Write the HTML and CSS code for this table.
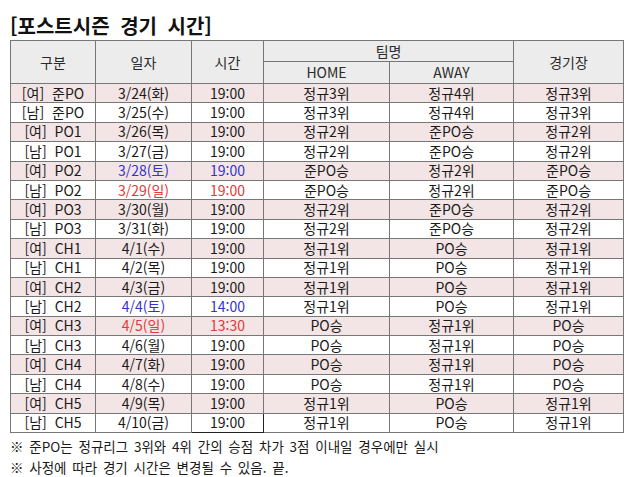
FILE: index.html
```html
<!DOCTYPE html>
<html lang="ko">
<head>
<meta charset="utf-8">
<link rel="stylesheet" href="styles.css">
</head>
<body>
<div class="page">
  <h1 class="title">[포스트시즌 경기 시간]</h1>
  <table class="sched">
    <colgroup>
      <col class="c1"><col class="c2"><col class="c3"><col class="c4"><col class="c5"><col class="c6">
    </colgroup>
    <thead>
      <tr class="h1">
        <th rowspan="2">구분</th>
        <th rowspan="2">일자</th>
        <th rowspan="2">시간</th>
        <th colspan="2">팀명</th>
        <th rowspan="2">경기장</th>
      </tr>
      <tr class="h2">
        <th>HOME</th>
        <th>AWAY</th>
      </tr>
    </thead>
    <tbody>
      <tr class="w"><td>[여] &nbsp;준PO</td><td>3/24(화)</td><td>19:00</td><td>정규3위</td><td>정규4위</td><td>정규3위</td></tr>
      <tr class="m"><td>[남] &nbsp;준PO</td><td>3/25(수)</td><td>19:00</td><td>정규3위</td><td>정규4위</td><td>정규3위</td></tr>
      <tr class="w"><td>[여] &nbsp;PO1</td><td>3/26(목)</td><td>19:00</td><td>정규2위</td><td>준PO승</td><td>정규2위</td></tr>
      <tr class="m"><td>[남] &nbsp;PO1</td><td>3/27(금)</td><td>19:00</td><td>정규2위</td><td>준PO승</td><td>정규2위</td></tr>
      <tr class="w"><td>[여] &nbsp;PO2</td><td class="sat">3/28(토)</td><td class="sat">19:00</td><td>준PO승</td><td>정규2위</td><td>준PO승</td></tr>
      <tr class="m"><td>[남] &nbsp;PO2</td><td class="sun">3/29(일)</td><td class="sun">19:00</td><td>준PO승</td><td>정규2위</td><td>준PO승</td></tr>
      <tr class="w"><td>[여] &nbsp;PO3</td><td>3/30(월)</td><td>19:00</td><td>정규2위</td><td>준PO승</td><td>정규2위</td></tr>
      <tr class="m"><td>[남] &nbsp;PO3</td><td>3/31(화)</td><td>19:00</td><td>정규2위</td><td>준PO승</td><td>정규2위</td></tr>
      <tr class="w"><td>[여] &nbsp;CH1</td><td>4/1(수)</td><td>19:00</td><td>정규1위</td><td>PO승</td><td>정규1위</td></tr>
      <tr class="m"><td>[남] &nbsp;CH1</td><td>4/2(목)</td><td>19:00</td><td>정규1위</td><td>PO승</td><td>정규1위</td></tr>
      <tr class="w"><td>[여] &nbsp;CH2</td><td>4/3(금)</td><td>19:00</td><td>정규1위</td><td>PO승</td><td>정규1위</td></tr>
      <tr class="m"><td>[남] &nbsp;CH2</td><td class="sat">4/4(토)</td><td class="sat">14:00</td><td>정규1위</td><td>PO승</td><td>정규1위</td></tr>
      <tr class="w"><td>[여] &nbsp;CH3</td><td class="sun">4/5(일)</td><td class="sun">13:30</td><td>PO승</td><td>정규1위</td><td>PO승</td></tr>
      <tr class="m"><td>[남] &nbsp;CH3</td><td>4/6(월)</td><td>19:00</td><td>PO승</td><td>정규1위</td><td>PO승</td></tr>
      <tr class="w"><td>[여] &nbsp;CH4</td><td>4/7(화)</td><td>19:00</td><td>PO승</td><td>정규1위</td><td>PO승</td></tr>
      <tr class="m"><td>[남] &nbsp;CH4</td><td>4/8(수)</td><td>19:00</td><td>PO승</td><td>정규1위</td><td>PO승</td></tr>
      <tr class="w"><td>[여] &nbsp;CH5</td><td>4/9(목)</td><td>19:00</td><td>정규1위</td><td>PO승</td><td>정규1위</td></tr>
      <tr class="m"><td>[남] &nbsp;CH5</td><td>4/10(금)</td><td class="boxed">19:00</td><td>정규1위</td><td>PO승</td><td>정규1위</td></tr>
    </tbody>
  </table>
  <div class="notes">
    <p>※ 준PO는 정규리그 3위와 4위 간의 승점 차가 3점 이내일 경우에만 실시</p>
    <p>※ 사정에 따라 경기 시간은 변경될 수 있음. 끝.</p>
  </div>
</div>
</body>
</html>
```

FILE: styles.css
```css
html, body {
  margin: 0;
  padding: 0;
  background: #ffffff;
}
body {
  font-family: "Noto Sans CJK KR", "Noto Sans", sans-serif;
  color: #1a1a1a;
}
.page {
  padding: 12px 0 0 10px;
}
.title {
  margin: 0;
  font-size: 20px;
  font-weight: bold;
  line-height: 27px;
  height: 28px;
  color: #111111;
  word-spacing: 5px;
}
.sched {
  border-collapse: collapse;
  table-layout: fixed;
  width: 613px;
  font-size: 14px;
  border: 1px solid #555555;
}
.c1 { width: 85px; }
.c2 { width: 96px; }
.c3 { width: 72px; }
.c4 { width: 126px; }
.c5 { width: 124px; }
.c6 { width: 110px; }
.sched th, .sched td {
  border: 1px solid #777777;
  padding: 0;
  text-align: center;
  vertical-align: middle;
  line-height: 17px;
  font-weight: normal;
  white-space: nowrap;
}
.sched thead th {
  background: #ececec;
  color: #2a2a2a;
}
.h1 th { height: 20px; }
.h2 th { height: 21px; }
.sched tbody tr { height: 19.4px; }
.sched tbody td { height: 18px; }
.sched tr.w td { background: #f3e5e5; }
.sched tr.m td { background: #ffffff; }
.sched td.sat { color: #3434c8; }
.sched td.sun { color: #e03a3a; }
.sched td.boxed { border: 1px solid #222222; }
.notes {
  margin-top: 3px;
  font-size: 13.5px;
  color: #1a1a1a;
}
.notes p {
  margin: 0;
  line-height: 21px;
  word-spacing: 2px;
}
```
